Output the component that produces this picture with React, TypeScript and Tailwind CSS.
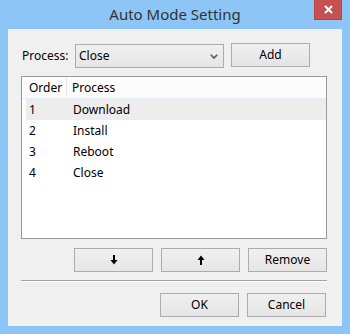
import React from "react";

function Btn({ children, className = "" }: { children: React.ReactNode; className?: string }) {
  return (
    <div
      className={
        "w-[79px] h-[24px] flex items-center justify-center border border-[#acacac] bg-gradient-to-b from-[#f0f0f0] to-[#e5e5e5] text-black " +
        className
      }
    >
      {children}
    </div>
  );
}

function ArrowDown() {
  return (
    <svg width="8" height="10" viewBox="0 0 8 10">
      <rect x="3" y="0" width="2" height="5" fill="#000" />
      <polygon points="0.5,5 7.5,5 4,9.5" fill="#000" />
    </svg>
  );
}

function ArrowUp() {
  return (
    <svg width="8" height="10" viewBox="0 0 8 10">
      <rect x="3" y="5" width="2" height="5" fill="#000" />
      <polygon points="0.5,5 7.5,5 4,0.5" fill="#000" />
    </svg>
  );
}

const rows = [
  ["1", "Download"],
  ["2", "Install"],
  ["3", "Reboot"],
  ["4", "Close"],
];

export default function App() {
  return (
    <div className="w-[350px] h-[334px] bg-[#8dc5f6] flex flex-col font-['Noto_Sans',sans-serif] text-[12px] text-black">
      <div className="h-[29px] grid grid-cols-[1fr_auto_1fr]">
        <div />
        <div className="text-[15px] text-[#333] leading-[29px]">Auto Mode Setting</div>
        <div className="flex justify-end items-start pr-[8px]">
          <div className="w-[28px] h-[20px] bg-[#c75050] border border-[#b64545] border-t-0 flex items-center justify-center">
            <svg width="9" height="9" viewBox="0 0 9 9">
              <path d="M1 1 L8 8 M8 1 L1 8" stroke="#fff" strokeWidth="2" />
            </svg>
          </div>
        </div>
      </div>
      <div className="mx-[8px] mb-[8px] flex-1 bg-[#f0f0f0] flex flex-col pl-[13px] pr-[15px] pt-[14px] pb-[9px]">
        <div className="flex items-start h-[24px]">
          <div className="w-[54px] h-[24px] mt-[1px] pl-[1px] flex items-center">Process:</div>
          <div className="w-[149px] h-[24px] mt-[1px] border border-[#acacac] bg-gradient-to-b from-[#f0f0f0] to-[#e5e5e5] flex items-center justify-between pl-[3px] pr-[5px]">
            <span>Close</span>
            <svg width="8" height="5" viewBox="0 0 8 5">
              <path d="M0.8 0.8 L4 4 L7.2 0.8" stroke="#555" strokeWidth="1.6" fill="none" />
            </svg>
          </div>
          <Btn className="ml-[7px]">Add</Btn>
        </div>

        <div className="mt-[9px] h-[163px] border border-[#9a9a9a] bg-white flex flex-col">
          <div className="h-[22px] flex bg-[#fcfcfc] border-b border-[#e3ecf7]">
            <div className="w-[45px] pl-[7px] flex items-center border-r border-[#e5e9ef]">Order</div>
            <div className="pl-[5px] flex items-center">Process</div>
          </div>
          {rows.map(([n, p], i) => (
            <div
              key={n}
              className={"h-[21px] ml-[4px] flex items-center " + (i === 0 ? "bg-[#ededed]" : "")}
            >
              <div className="w-[41px] pl-[3px]">{n}</div>
              <div className="pl-[6px]">{p}</div>
            </div>
          ))}
        </div>

        <div className="mt-[9px] flex justify-end gap-[8px]">
          <Btn>
            <ArrowDown />
          </Btn>
          <Btn>
            <ArrowUp />
          </Btn>
          <Btn>Remove</Btn>
        </div>

        <div className="mt-[8px] h-[2px] border-t border-[#a0a0a0] border-b border-b-white" />

        <div className="mt-[11px] mr-[1px] flex justify-end gap-[8px]">
          <Btn>OK</Btn>
          <Btn>Cancel</Btn>
        </div>
      </div>
    </div>
  );
}
